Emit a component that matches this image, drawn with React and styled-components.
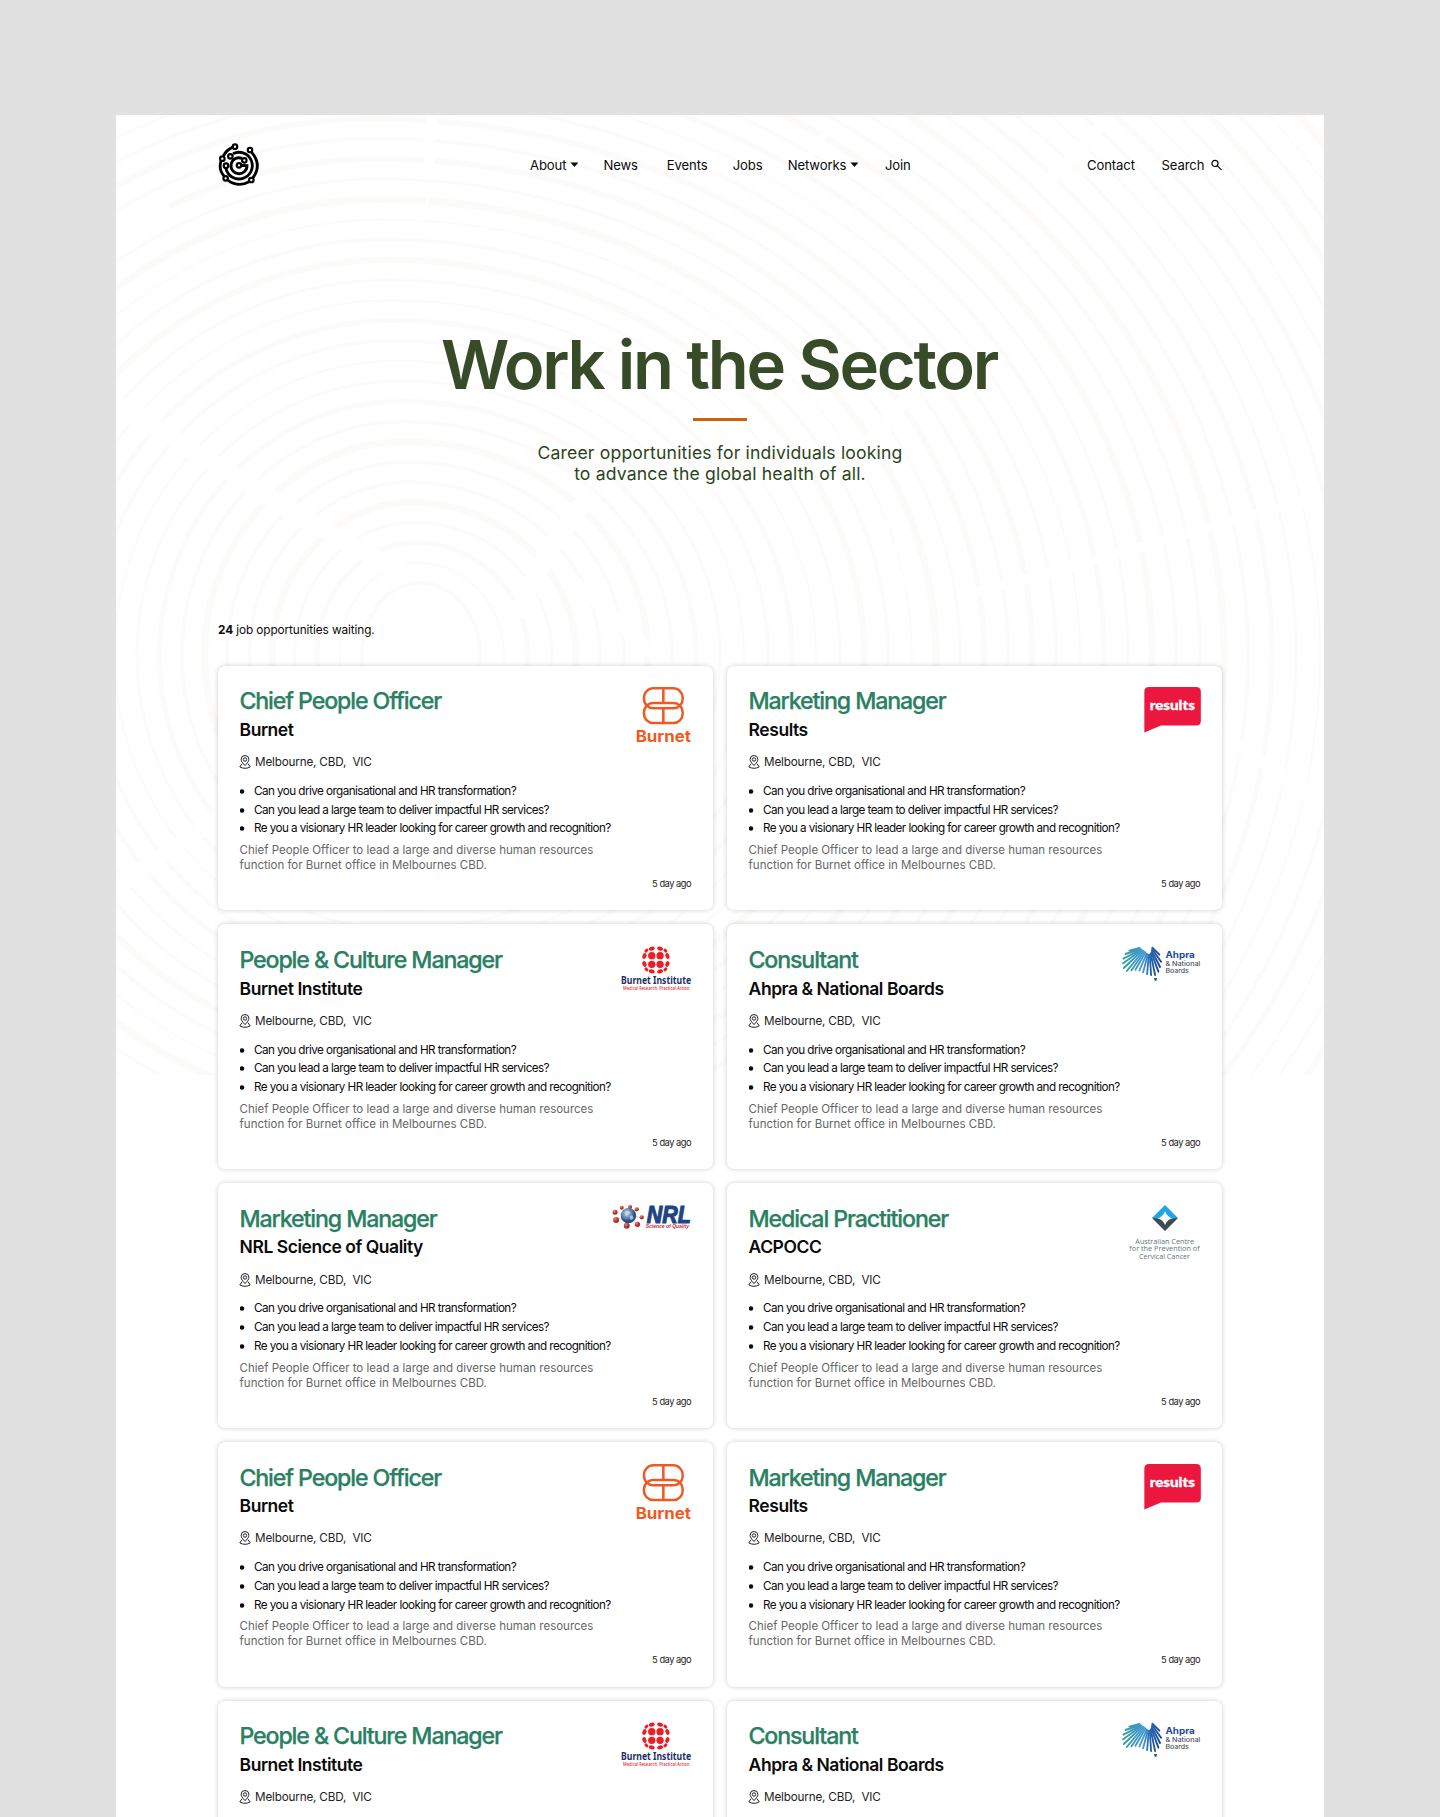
import React from "react";
import styled, { createGlobalStyle } from "styled-components";

const GlobalStyle = createGlobalStyle`
  *, *::before, *::after { box-sizing: border-box; }
  body {
    margin: 0;
    background: #e1e1e1;
    font-family: Inter, "Liberation Sans", sans-serif;
    color: #0b0b0b;
  }
`;

const Backdrop = styled.div`
  height: 1817px;
  padding: 115px 116px 0;
  overflow: hidden;
  background: #e1e1e1;
`;

const Page = styled.div`
  position: relative;
  height: 1800px;
  padding: 28.2px 102px 0;
  background: #ffffff;
`;

const Rings = styled.svg`
  position: absolute;
  top: 0;
  left: 0;
`;

const Content = styled.div`
  position: relative;
`;

const Header = styled.header`
  display: flex;
  align-items: center;
  height: 42px;
`;

const Nav = styled.nav`
  display: flex;
  align-items: center;
  margin-left: ${(p) => p.$start};
`;

const NavLink = styled.a`
  display: flex;
  align-items: center;
  width: ${(p) => p.$width}px;
  padding-top: 1px;
  font-size: 13.1px;
  line-height: 20px;
  letter-spacing: -0.1px;
  white-space: nowrap;
`;

const Caret = styled.span`
  width: 8px;
  height: 4.5px;
  margin-left: 4px;
  background: #0b0b0b;
  clip-path: polygon(0 0, 100% 0, 50% 100%);
`;

const SearchIcon = styled.svg`
  margin-left: 6.5px;
`;

const Hero = styled.section`
  display: flex;
  flex-direction: column;
  align-items: center;
  margin-top: 140px;
  text-align: center;
`;

const Title = styled.h1`
  margin: 0;
  font-size: 67px;
  line-height: 80px;
  font-weight: 600;
  letter-spacing: -2.33px;
  text-indent: -2px;
  color: #374b29;
  white-space: nowrap;
`;

const Rule = styled.hr`
  width: 54px;
  height: 3px;
  margin: 13px 0 20.6px;
  border: 0;
  background: #c8640a;
`;

const Lead = styled.p`
  margin: 0;
  font-size: 17.6px;
  line-height: 21.6px;
  letter-spacing: 0.16px;
  color: #2c4420;
`;

const Count = styled.p`
  margin: 137.1px 0 27.5px;
  font-size: 11.8px;
  line-height: 16px;
  letter-spacing: -0.1px;
`;

const Grid = styled.main`
  display: grid;
  grid-template-columns: 495px 495px;
  grid-auto-rows: 244.8px;
  gap: 14px;
`;

const Card = styled.article`
  padding: 21.7px 22px 0;
  border-radius: 7px;
  background: #ffffff;
  box-shadow: 0 0 5px rgba(0, 0, 0, 0.2);
`;

const CardTop = styled.div`
  display: flex;
  justify-content: space-between;
  height: 83px;
`;

const Role = styled.h2`
  margin: 0 0 0 -0.6px;
  font-size: 23.2px;
  line-height: 28px;
  font-weight: 500;
  letter-spacing: -1.12px;
  color: #2a8062;
  -webkit-text-stroke: 0.25px #2a8062;
  white-space: nowrap;
`;

const Company = styled.h3`
  margin: 2.6px 0 12.2px -0.4px;
  font-size: 17.5px;
  line-height: 24px;
  font-weight: 600;
  letter-spacing: -0.46px;
  white-space: nowrap;
`;

const Location = styled.p`
  display: flex;
  align-items: center;
  gap: 4px;
  margin: 0;
  font-size: 11.7px;
  line-height: 16px;
  letter-spacing: -0.17px;
  color: #222222;
  white-space: pre;
`;

const PinSvg = styled.svg`
  flex: none;
  margin-left: -1px;
`;

const Points = styled.ul`
  margin: 11.6px 0 4.7px;
  padding: 0;
  list-style: none;
`;

const Point = styled.li`
  display: flex;
  align-items: center;
  font-size: 11.7px;
  line-height: 18.8px;
  letter-spacing: -0.56px;
  white-space: nowrap;
`;

const Bullet = styled.svg`
  flex: none;
  margin-right: 9.4px;
`;

const Summary = styled.p`
  margin: 0 0 0 -0.4px;
  font-size: 11.5px;
  line-height: 15px;
  letter-spacing: -0.01px;
  color: #666666;
`;

const Posted = styled.p`
  margin: 5px 0 0;
  font-size: 9.3px;
  line-height: 12px;
  letter-spacing: -0.5px;
  text-align: right;
  color: #222222;
`;

const LogoSvg = styled.svg`
  flex: none;
  overflow: visible;
`;

const ringWidths = [4, 2, 5, 3, 7, 4, 4, 7, 4, 5, 3, 2, 4, 5, 2, 3, 6.5, 4, 1.5, 7.5, 3, 6, 4, 6];
const ringPath = (i) => {
  const cx = 304 - 2 * i;
  const cy = 540;
  const top = 72 + 20.2 * i;
  const left = 58 + 20.5 * i;
  const right = 60 + 26 * i;
  return `M${cx - left} ${cy}A${left} ${top} 0 0 1 ${cx} ${cy - top}A${right} ${top} 0 0 1 ${cx + right} ${cy}A${right} ${top} 0 0 1 ${cx} ${cy + top}A${left} ${top} 0 0 1 ${cx - left} ${cy}`;
};
const cracks = [
  { d: "M316 0L312 60", w: 11 },
  { d: "M312 60L311 92", w: 2 },
  { d: "M0 290L60 325L190 405L290 460", w: 17 },
  { d: "M-5 120L55 95", w: 12 },
  { d: "M470 385L430 440L400 500", w: 18 },
  { d: "M715 10L690 45", w: 7 },
  { d: "M985 10L925 75", w: 12 },
  { d: "M800 270L770 310L740 340", w: 14 },
  { d: "M850 480L960 450L1190 385", w: 9 },
  { d: "M430 440L560 560", w: 12 },
  { d: "M1080 600L1208 690", w: 12 },
  { d: "M0 770L110 700", w: 14 },
];

function BackgroundRings() {
  return (
    <Rings width="1208" height="960" viewBox="0 0 1208 960" fill="none">
      {Array.from({ length: 46 }, (_, i) => (
        <path key={i} d={ringPath(i)} stroke="#fcfbf9" strokeWidth={ringWidths[i % 24]} />
      ))}
      {cracks.map((c) => (
        <path key={c.d} d={c.d} stroke="#ffffff" strokeWidth={c.w} />
      ))}
    </Rings>
  );
}

function BrandMark() {
  const nodes = [[104, 80], [149, 90], [66, 116], [90, 109], [132, 121], [77, 137], [116, 136], [76, 175], [153, 180]];
  return (
    <svg width="42" height="43" viewBox="53 69 126 129" fill="none" stroke="#000000" strokeWidth="8.5">
      <path d="M96 82Q78 90 69 108M62 123Q54 148 71 168M83 181Q114 203 146 185M158 173Q186 134 154 97" />
      <path d="M77 146A40 40 0 1 0 98 101" />
      <path d="M125 115A24 24 0 1 0 140 137L124 136.500" />
      {nodes.map(([x, y]) => (
        <circle key={`${x}-${y}`} cx={x} cy={y} r="6.8" strokeWidth="6.5" fill="#ffffff" />
      ))}
    </svg>
  );
}

function PinIcon() {
  return (
    <PinSvg width="12" height="14" viewBox="0 0 12 14" fill="none" stroke="#222222" strokeWidth="1">
      <path d="M6 10.600C3.700 8 2.100 6.200 2.100 4.400a3.900 3.900 0 0 1 7.800 0C9.900 6.200 8.300 8 6 10.600Z" />
      <circle cx="6" cy="4.500" r="1.700" />
      <path d="M3 8.700L.8 11.900Q3.200 13.300 6 13.300T11.200 11.900L9 8.700" />
    </PinSvg>
  );
}

function BurnetLogo() {
  return (
    <LogoSvg width="55" height="56" viewBox="0 0 165 168">
      <g fill="none" stroke="#ee5a24" strokeWidth="7.5">
        <rect x="24" y="4" width="116" height="60" rx="28" />
        <rect x="24" y="48" width="116" height="60" rx="28" />
        <path d="M82 4V48M82 64V108" />
      </g>
      <text x="-1" y="166" textLength="166" lengthAdjust="spacingAndGlyphs" fontFamily="Inter" fontWeight="700" fontSize="48" fill="#ee5a24">Burnet</text>
    </LogoSvg>
  );
}

function ResultsLogo() {
  return (
    <LogoSvg width="56.500" height="46" viewBox="-1 0 170 138">
      <path d="M14 0H156Q170 0 170 14V102Q170 116 156 116H50L0 137V14Q0 0 14 0Z" fill="#ec173f" />
      <text x="16" y="70" textLength="136" lengthAdjust="spacingAndGlyphs" fontFamily="Lato" fontWeight="900" fontSize="42" fill="#ffffff" stroke="#ffffff" strokeWidth="1">results</text>
    </LogoSvg>
  );
}

function BurnetInstituteLogo() {
  const petals = [
    [-12, -13, 11, 11], [13, -13, 11, 11], [-12, 13, 11, 11], [13, 13, 11, 11],
    [-12, -34, 9, 6, -18], [13, -34, 9, 6, 18], [-12, 34, 9, 6, 18], [13, 34, 9, 6, -18],
    [-34, -12, 6, 9, 18], [35, -12, 6, 9, -18], [-34, 12, 6, 9, -18], [35, 12, 6, 9, 18],
    [-28, -28, 7, 4.5, -45], [29, -28, 7, 4.5, 45], [-28, 28, 7, 4.5, 45], [29, 28, 7, 4.5, -45],
  ];
  return (
    <LogoSvg width="70.500" height="46" viewBox="0 1 211 138">
      <g transform="translate(104 43)" fill="#ee1c24">
        {petals.map(([x, y, rx, ry, turn = 0]) => (
          <ellipse key={`${x},${y}`} rx={rx} ry={ry} transform={`translate(${x} ${y}) rotate(${turn})`} />
        ))}
      </g>
      <text x="0" y="116" textLength="210" lengthAdjust="spacingAndGlyphs" fontFamily="Noto Sans" fontWeight="700" fontSize="31" fill="#1d2f63">Burnet Institute</text>
      <text x="6" y="133" textLength="202" lengthAdjust="spacingAndGlyphs" fontFamily="Open Sans" fontWeight="600" fontSize="13" fill="#ee2a30">Medical Research. Practical Action.</text>
    </LogoSvg>
  );
}

function AhpraLogo() {
  const rays = [
    [52, 7, 22, 15], [55, 10, 10, 25], [57, 12, 4, 39], [59, 13, 3, 53], [61, 15, 5, 67],
    [64, 16, 14, 76], [67, 18, 28, 74], [70, 21, 40, 72], [74, 24, 52, 74], [77, 27, 63, 80],
    [80, 28, 75, 85], [83, 27, 87, 88], [86, 25, 99, 88], [88, 21, 109, 78], [89, 15, 114, 64],
    [90, 10, 117, 48], [91, 6, 112, 27],
  ];
  return (
    <LogoSvg width="78.500" height="36" viewBox="0 1 235 108">
      <defs>
        <linearGradient id="fan" gradientUnits="userSpaceOnUse" x1="0" y1="50" x2="117" y2="58">
          <stop offset="0" stopColor="#35a58c" />
          <stop offset="0.25" stopColor="#3596b4" />
          <stop offset="0.55" stopColor="#4a9bd6" />
          <stop offset="0.72" stopColor="#2566b0" />
          <stop offset="1" stopColor="#183f8e" />
        </linearGradient>
      </defs>
      <g stroke="url(#fan)" strokeWidth="5.600" strokeLinecap="round">
        {rays.map(([x1, y1, x2, y2]) => (
          <line key={`${x2}-${y2}`} x1={x1} y1={y1} x2={x2} y2={y2} />
        ))}
      </g>
      <path d="M96 97h9l-2 8h-5z" fill="#1c4796" />
      <text x="130" y="36" textLength="88" lengthAdjust="spacingAndGlyphs" fontFamily="Inter" fontWeight="700" fontSize="27" fill="#1c4c98">Ahpra</text>
      <text x="130" y="61" textLength="105" lengthAdjust="spacingAndGlyphs" fontFamily="Inter" fontWeight="500" fontSize="18.500" fill="#4a5560">&amp; National</text>
      <text x="130" y="82" textLength="70" lengthAdjust="spacingAndGlyphs" fontFamily="Inter" fontWeight="500" fontSize="18.500" fill="#4a5560">Boards</text>
    </LogoSvg>
  );
}

function NrlLogo() {
  const atoms = [[6, 23, 7.500], [26, 9, 6], [51, 7, 6], [71, 14, 6.500], [86, 38, 6.500], [73, 59, 8], [41, 63, 9], [9, 46, 9]];
  return (
    <LogoSvg width="78.500" height="26" viewBox="0 1 235 78">
      <defs>
        <radialGradient id="globe" cx="0.4" cy="0.35"><stop offset="0" stopColor="#b5c4dc" /><stop offset="0.6" stopColor="#6d8cba" /><stop offset="1" stopColor="#244d86" /></radialGradient>
        <radialGradient id="atom" cx="0.35" cy="0.3"><stop offset="0" stopColor="#dc8a7c" /><stop offset="1" stopColor="#ac2c24" /></radialGradient>
      </defs>
      <g stroke="#e6c8c2" strokeWidth="2">
        {atoms.map(([x, y]) => <line key={`${x}-${y}`} x1="46" y1="33" x2={x} y2={y} />)}
      </g>
      {atoms.map(([x, y, r]) => <circle key={`${x}-${y}`} cx={x} cy={y} r={r} fill="url(#atom)" />)}
      <circle cx="46" cy="33" r="23" fill="url(#globe)" />
      <path d="M34 22q8-8 14-2t-2 10-8 4zM50 34q10-4 11 4t-9 8z" fill="#d5dde9" opacity="0.7" />
      <text x="101" y="56" textLength="132" lengthAdjust="spacingAndGlyphs" fontFamily="Liberation Sans" fontStyle="italic" fontWeight="700" fontSize="73" fill="#1f4486" stroke="#1f4486" strokeWidth="3.5">NRL</text>
      <text x="98" y="71" textLength="130" lengthAdjust="spacingAndGlyphs" fontFamily="Liberation Sans" fontStyle="italic" fontWeight="700" fontSize="13.5" fill="#d1303a">Science of Quality</text>
    </LogoSvg>
  );
}

function AcpoccLogo() {
  return (
    <LogoSvg width="71" height="56" viewBox="0 0 213 168">
      <path d="M69 39L108 0L147 39L133 42Q114 36 108 19Q102 36 83 42Z" fill="#1ea7e4" />
      <path d="M69 39L108 78L147 39L133 40Q114 43 108 60Q102 43 83 40Z" fill="#3d4b57" />
      <g fontFamily="Open Sans" fontWeight="400" fontSize="22" fill="#66737d">
        <text x="19" y="116" textLength="176" lengthAdjust="spacingAndGlyphs">Australian Centre</text>
        <text x="1" y="139" textLength="211" lengthAdjust="spacingAndGlyphs">for the Prevention of</text>
        <text x="30" y="162" textLength="153" lengthAdjust="spacingAndGlyphs">Cervical Cancer</text>
      </g>
    </LogoSvg>
  );
}

const employers = [
  { role: "Chief People Officer", company: "Burnet", Logo: BurnetLogo },
  { role: "Marketing Manager", company: "Results", Logo: ResultsLogo },
  { role: "People & Culture Manager", company: "Burnet Institute", Logo: BurnetInstituteLogo },
  { role: "Consultant", company: "Ahpra & National Boards", Logo: AhpraLogo },
  { role: "Marketing Manager", company: "NRL Science of Quality", Logo: NrlLogo },
  { role: "Medical Practitioner", company: "ACPOCC", Logo: AcpoccLogo },
];
const jobs = [...employers, ...employers.slice(0, 4)];

const points = [
  "Can you drive organisational and HR transformation?",
  "Can you lead a large team to deliver impactful HR services?",
  "Re you a visionary HR leader looking for career growth and recognition?",
];

function JobCard({ role, company, Logo }) {
  return (
    <Card>
      <CardTop>
        <div>
          <Role>{role}</Role>
          <Company>{company}</Company>
          <Location><PinIcon />{"Melbourne, CBD,  VIC"}</Location>
        </div>
        <Logo />
      </CardTop>
      <Points>
        {points.map((point) => (
          <Point key={point}>
            <Bullet width="4.6" height="5"><circle cx="2" cy="2.5" r="2.3" fill="#0b0b0b" /></Bullet>
            {point}
          </Point>
        ))}
      </Points>
      <Summary>
        Chief People Officer to lead a large and diverse human resources
        <br />
        function for Burnet office in Melbournes CBD.
      </Summary>
      <Posted>5 day ago</Posted>
    </Card>
  );
}

export default function App() {
  return (
    <>
      <GlobalStyle />
      <Backdrop>
        <Page>
          <BackgroundRings />
          <Content>
            <Header>
              <BrandMark />
              <Nav $start="270px">
                <NavLink $width={73.4}>About<Caret /></NavLink>
                <NavLink $width={63.3}>News</NavLink>
                <NavLink $width={66}>Events</NavLink>
                <NavLink $width={55}>Jobs</NavLink>
                <NavLink $width={97.2}>Networks<Caret /></NavLink>
                <NavLink $width={26}>Join</NavLink>
              </Nav>
              <Nav $start="auto">
                <NavLink $width={74.5}>Contact</NavLink>
                <NavLink $width={60.5}>
                  Search
                  <SearchIcon width="12" height="12" viewBox="0 0 12 12" fill="none" stroke="#0b0b0b" strokeWidth="1.300">
                    <circle cx="4.300" cy="4.300" r="3.300" />
                    <path d="M6.700 6.700L11.300 11.300" />
                  </SearchIcon>
                </NavLink>
              </Nav>
            </Header>
            <Hero>
              <Title>Work in the Sector</Title>
              <Rule />
              <Lead>
                Career opportunities for individuals looking
                <br />
                to advance the global health of all.
              </Lead>
            </Hero>
            <Count><b>24</b> job opportunities waiting.</Count>
            <Grid>
              {jobs.map((job, i) => <JobCard key={i} {...job} />)}
            </Grid>
          </Content>
        </Page>
      </Backdrop>
    </>
  );
}
